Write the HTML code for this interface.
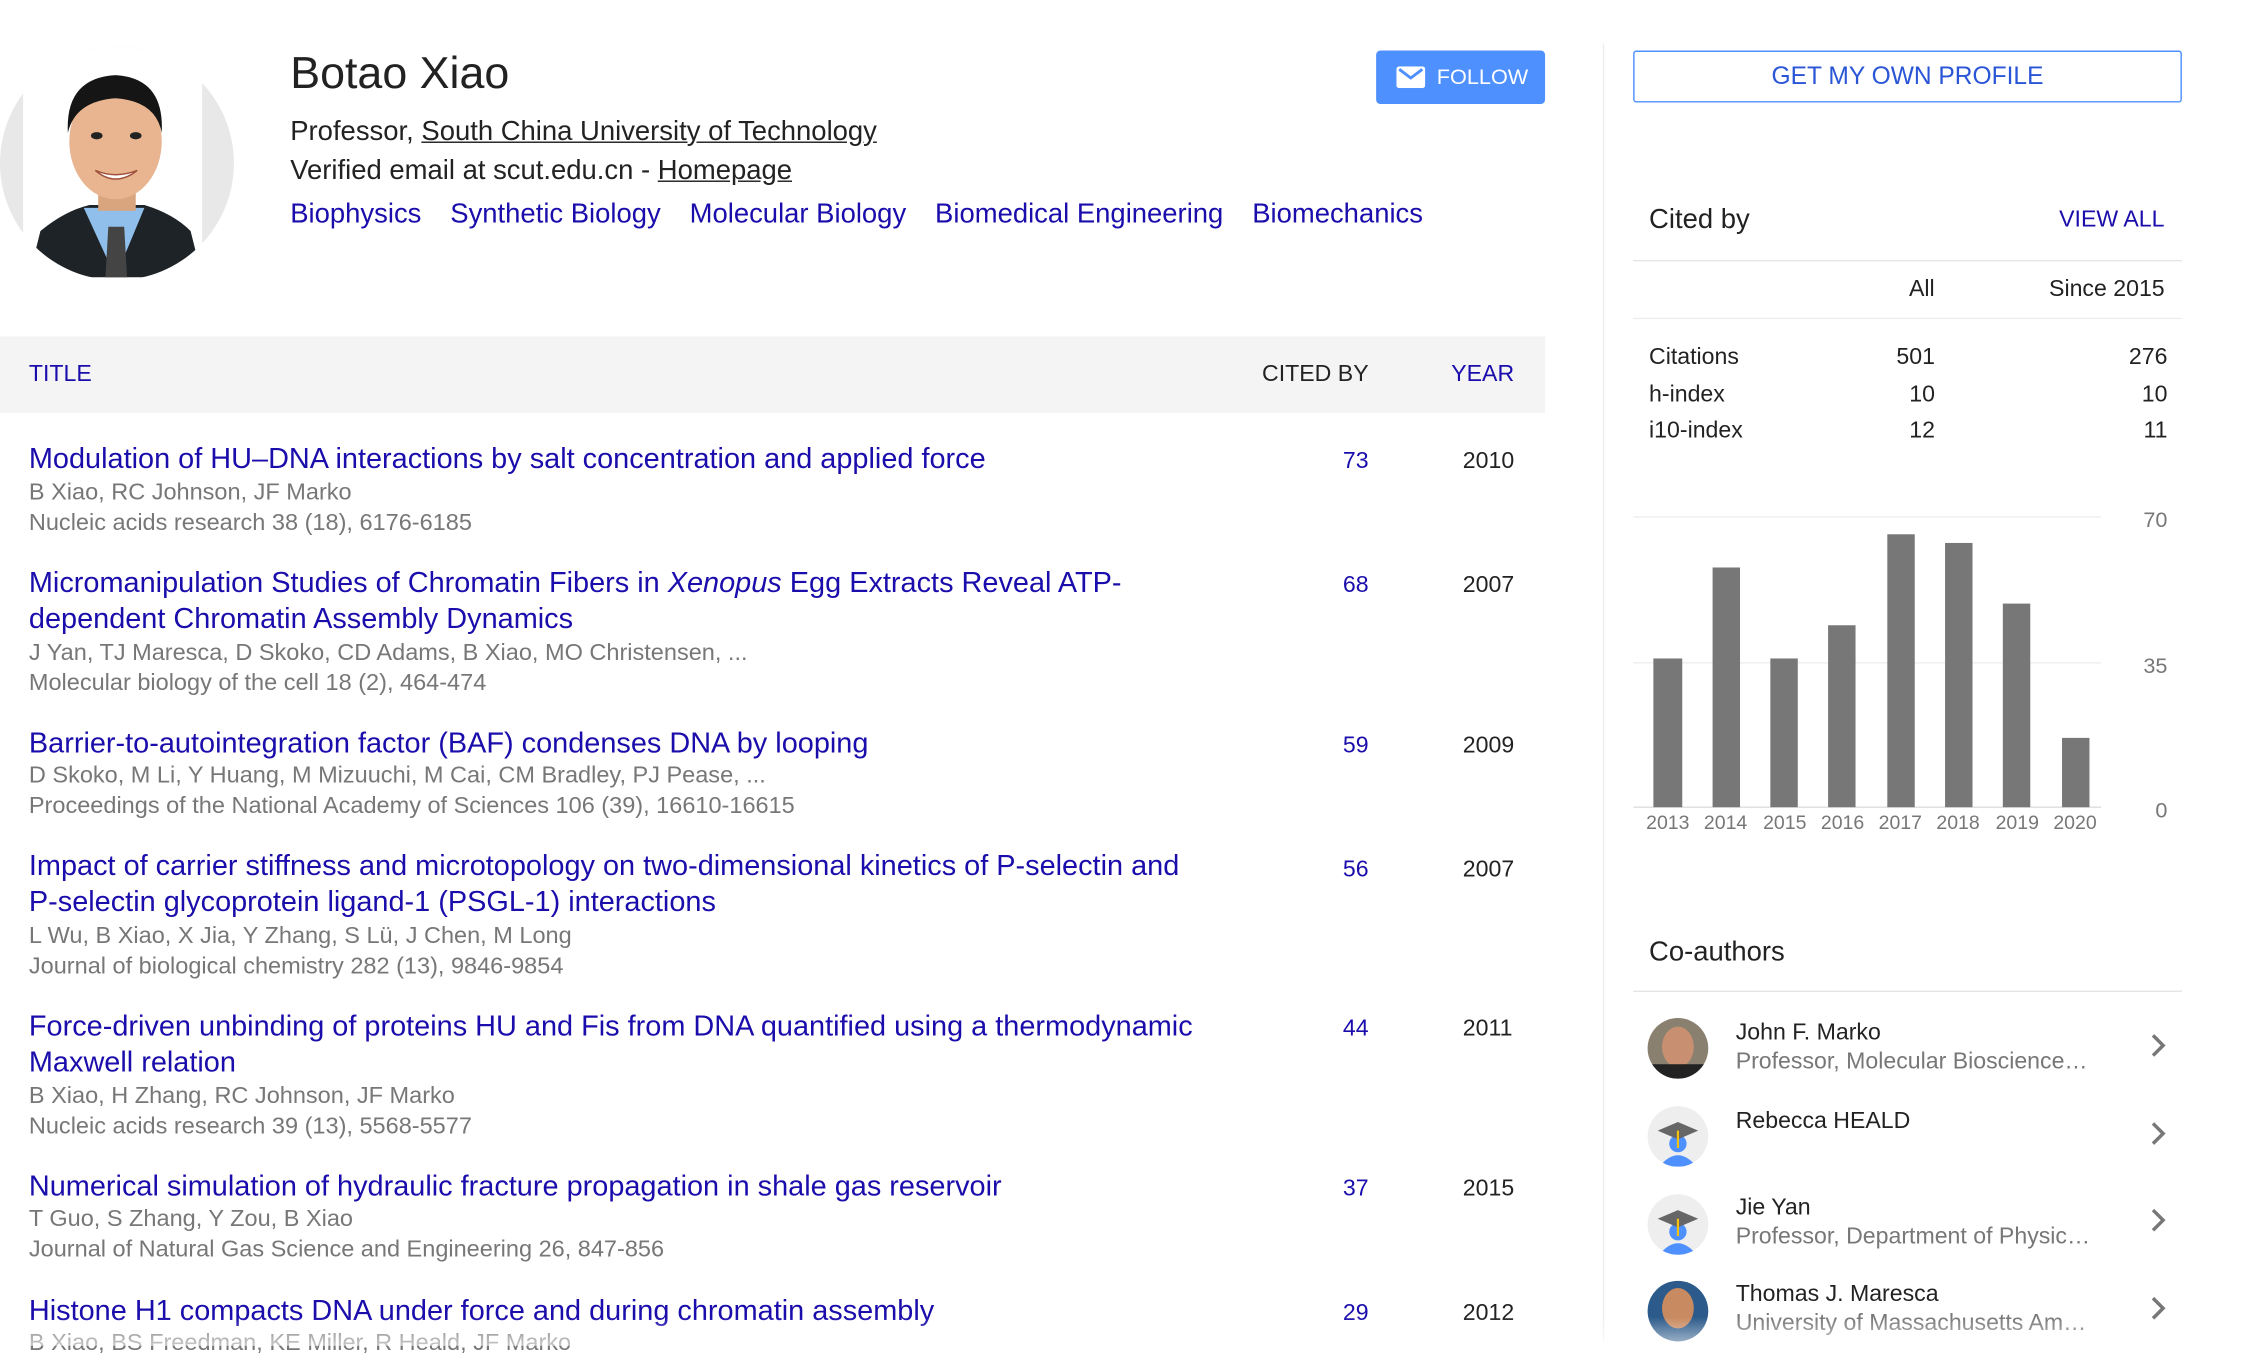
<!DOCTYPE html>
<html><head><meta charset="utf-8"><style>
html,body{margin:0;padding:0;background:#fff;width:2264px;height:1340px;overflow:hidden}
#w{position:absolute;left:0;top:0;width:1568px;height:928px;transform:scale(1.444,1.444);transform-origin:0 0;font-family:"Liberation Sans",Arial,sans-serif;color:#222}
.a{position:absolute;white-space:nowrap}
.b{color:#1a0dab}
.g{color:#777}
.t{font-size:20px;color:#1a0dab;line-height:25px}
.s{font-size:16.3px;color:#777;line-height:21px}
.n{font-size:16px;color:#1a0dab}
.y{font-size:16px;color:#222}
u{text-decoration:underline}
</style></head><body><div id="w">
<div class="a" style="left:0;top:32px;width:162px;height:162px;border-radius:50%;background:#e8e8e8;overflow:hidden">
<div style="position:absolute;left:16px;top:0;width:124px;height:162px;background:#fff"></div>
<svg style="position:absolute;left:0;top:0" width="162" height="162" viewBox="0 0 162 162">
<path d="M20 160 L28 128 Q45 114 62 110 L100 110 Q120 116 132 128 L140 160Z" fill="#1e2328"/>
<path d="M58 112 L80 160 L100 112 Z" fill="#8fbfea"/>
<path d="M75 125 L86 125 L88 160 L73 160Z" fill="#444"/>
<rect x="68" y="88" width="26" height="26" fill="#d9a57f"/>
<ellipse cx="80" cy="66" rx="32" ry="40" fill="#e8b590"/>
<path d="M47 60 Q45 22 80 20 Q114 22 112 60 Q108 38 80 36 Q52 38 47 60Z" fill="#151515"/>
<ellipse cx="67" cy="62" rx="4" ry="2.5" fill="#222"/><ellipse cx="94" cy="62" rx="4" ry="2.5" fill="#222"/>
<path d="M66 86 Q80 98 95 86 Q80 92 66 86Z" fill="#fff" stroke="#a0503a"/>
</svg></div>
<div class="a" style="left:201px;top:33px;font-size:31px;color:#222">Botao Xiao</div>
<div class="a" style="left:201px;top:81px;font-size:19px">Professor, <u>South China University of Technology</u></div>
<div class="a" style="left:201px;top:108px;font-size:19px">Verified email at scut.edu.cn - <u>Homepage</u></div>
<div class="a b" style="left:201px;top:138px;font-size:19px">Biophysics<span style="margin-left:20px">Synthetic Biology</span><span style="margin-left:20px">Molecular Biology</span><span style="margin-left:20px">Biomedical Engineering</span><span style="margin-left:20px">Biomechanics</span></div>
<div class="a" style="left:953px;top:35px;width:117px;height:37px;background:#4d90fe;border-radius:3px;color:#fff;font-size:15px">
<svg style="position:absolute;left:14px;top:11px" width="20" height="15" viewBox="0 0 20 15"><rect width="20" height="15" rx="2" fill="#fff"/><path d="M2 2 L10 8 L18 2" stroke="#4d90fe" stroke-width="2" fill="none"/></svg>
<span style="position:absolute;left:42px;top:10px">FOLLOW</span></div>
<div class="a" style="left:0;top:233px;width:1070px;height:53px;background:#f4f4f4"></div>
<div class="a b" style="left:20px;top:251px;font-size:16px">TITLE</div>
<div class="a" style="left:874px;top:251px;font-size:16px">CITED BY</div>
<div class="a b" style="left:1005px;top:251px;font-size:16px">YEAR</div>

<div class="a t" style="left:20px;top:306px">Modulation of HU–DNA interactions by salt concentration and applied force</div>
<div class="a s" style="left:20px;top:331px">B Xiao, RC Johnson, JF Marko<br>Nucleic acids research 38 (18), 6176-6185</div>
<div class="a n" style="left:930px;top:311px">73</div><div class="a y" style="left:1013px;top:311px">2010</div>

<div class="a t" style="left:20px;top:392px">Micromanipulation Studies of Chromatin Fibers in <i>Xenopus</i> Egg Extracts Reveal ATP-<br>dependent Chromatin Assembly Dynamics</div>
<div class="a s" style="left:20px;top:442px">J Yan, TJ Maresca, D Skoko, CD Adams, B Xiao, MO Christensen, ...<br>Molecular biology of the cell 18 (2), 464-474</div>
<div class="a n" style="left:930px;top:397px">68</div><div class="a y" style="left:1013px;top:397px">2007</div>

<div class="a t" style="left:20px;top:503px">Barrier-to-autointegration factor (BAF) condenses DNA by looping</div>
<div class="a s" style="left:20px;top:527px">D Skoko, M Li, Y Huang, M Mizuuchi, M Cai, CM Bradley, PJ Pease, ...<br>Proceedings of the National Academy of Sciences 106 (39), 16610-16615</div>
<div class="a n" style="left:930px;top:508px">59</div><div class="a y" style="left:1013px;top:508px">2009</div>

<div class="a t" style="left:20px;top:588px">Impact of carrier stiffness and microtopology on two-dimensional kinetics of P-selectin and<br>P-selectin glycoprotein ligand-1 (PSGL-1) interactions</div>
<div class="a s" style="left:20px;top:638px">L Wu, B Xiao, X Jia, Y Zhang, S Lü, J Chen, M Long<br>Journal of biological chemistry 282 (13), 9846-9854</div>
<div class="a n" style="left:930px;top:594px">56</div><div class="a y" style="left:1013px;top:594px">2007</div>

<div class="a t" style="left:20px;top:699px">Force-driven unbinding of proteins HU and Fis from DNA quantified using a thermodynamic<br>Maxwell relation</div>
<div class="a s" style="left:20px;top:749px">B Xiao, H Zhang, RC Johnson, JF Marko<br>Nucleic acids research 39 (13), 5568-5577</div>
<div class="a n" style="left:930px;top:704px">44</div><div class="a y" style="left:1013px;top:704px">2011</div>

<div class="a t" style="left:20px;top:810px">Numerical simulation of hydraulic fracture propagation in shale gas reservoir</div>
<div class="a s" style="left:20px;top:834px">T Guo, S Zhang, Y Zou, B Xiao<br>Journal of Natural Gas Science and Engineering 26, 847-856</div>
<div class="a n" style="left:930px;top:815px">37</div><div class="a y" style="left:1013px;top:815px">2015</div>

<div class="a t" style="left:20px;top:896px">Histone H1 compacts DNA under force and during chromatin assembly</div>
<div class="a s" style="left:20px;top:920px">B Xiao, BS Freedman, KE Miller, R Heald, JF Marko</div>
<div class="a n" style="left:930px;top:901px">29</div><div class="a y" style="left:1013px;top:901px">2012</div>

<div class="a" style="left:1110px;top:30px;width:1px;height:898px;background:#eee"></div>
<div class="a" style="left:1131px;top:35px;width:378px;height:34px;border:1px solid #4d90fe;border-radius:2px;font-size:17px;text-align:center;line-height:34px;color:#2a55d6">GET MY OWN PROFILE</div>
<div class="a" style="left:1142px;top:142px;font-size:19px">Cited by</div>
<div class="a b" style="left:1426px;top:144px;font-size:16px">VIEW ALL</div>
<div class="a" style="left:1131px;top:180px;width:380px;height:1px;background:#e5e5e5"></div>
<div class="a" style="left:1322px;top:192px;font-size:16px">All</div>
<div class="a" style="left:1419px;top:192px;font-size:16px">Since 2015</div>
<div class="a" style="left:1131px;top:220px;width:380px;height:1px;background:#eee"></div>
<div class="a" style="left:1142px;top:235px;font-size:16px;line-height:25.5px">Citations<br>h-index<br>i10-index</div>
<div class="a" style="left:1300px;top:235px;width:40px;text-align:right;font-size:16px;line-height:25.5px">501<br>10<br>12</div>
<div class="a" style="left:1460px;top:235px;width:41px;text-align:right;font-size:16px;line-height:25.5px">276<br>10<br>11</div>
<svg class="a" style="left:1131px;top:340px" width="380" height="250" viewBox="1131 340 380 250">
<line x1="1131" y1="358" x2="1455" y2="358" stroke="#eee"/>
<line x1="1131" y1="459" x2="1455" y2="459" stroke="#eee"/>
<line x1="1131" y1="559" x2="1455" y2="559" stroke="#ddd"/>
<g fill="#777">
<rect x="1145" y="456" width="20" height="103"/><rect x="1186" y="393" width="19" height="166"/>
<rect x="1226" y="456" width="19" height="103"/><rect x="1266" y="433" width="19" height="126"/>
<rect x="1307" y="370" width="19" height="189"/><rect x="1347" y="376" width="19" height="183"/>
<rect x="1387" y="418" width="19" height="141"/><rect x="1428" y="511" width="19" height="48"/>
</g>
<g font-family="Liberation Sans,sans-serif" font-size="13.5" fill="#777" text-anchor="middle">
<text x="1155" y="574">2013</text><text x="1195" y="574">2014</text><text x="1236" y="574">2015</text><text x="1276" y="574">2016</text>
<text x="1316" y="574">2017</text><text x="1356" y="574">2018</text><text x="1397" y="574">2019</text><text x="1437" y="574">2020</text>
</g>
<g font-family="Liberation Sans,sans-serif" font-size="15" fill="#777" text-anchor="end">
<text x="1501" y="365">70</text><text x="1501" y="466">35</text><text x="1501" y="566">0</text>
</g></svg>
<div class="a" style="left:1142px;top:649px;font-size:19px">Co-authors</div>
<div class="a" style="left:1131px;top:686px;width:380px;height:1px;background:#e5e5e5"></div>
<div class="a" style="left:1141px;top:705px;width:42px;height:42px;border-radius:50%;background:#8a8070;overflow:hidden"><div style="position:absolute;left:10px;top:6px;width:22px;height:28px;border-radius:50%;background:#c89070"></div><div style="position:absolute;left:0;top:32px;width:42px;height:14px;background:#222"></div></div>
<div class="a" style="left:1202px;top:707px;font-size:16px">John F. Marko</div>
<div class="a g" style="left:1202px;top:727px;font-size:16px">Professor, Molecular Bioscience…</div>
<div class="a" style="left:1141px;top:766px;width:42px;height:42px;border-radius:50%;background:#eee;overflow:hidden"><svg width="42" height="42"><circle cx="21" cy="26" r="6" fill="#4d90fe"/><path d="M8 42 Q21 26 34 42Z" fill="#4d90fe"/><path d="M7 17 L21 11 L35 17 L21 23Z" fill="#666"/><line x1="21" y1="17" x2="21" y2="29" stroke="#f4c20d" stroke-width="1.5"/></svg></div>
<div class="a" style="left:1202px;top:768px;font-size:16px">Rebecca HEALD</div>
<div class="a" style="left:1141px;top:827px;width:42px;height:42px;border-radius:50%;background:#eee;overflow:hidden"><svg width="42" height="42"><circle cx="21" cy="26" r="6" fill="#4d90fe"/><path d="M8 42 Q21 26 34 42Z" fill="#4d90fe"/><path d="M7 17 L21 11 L35 17 L21 23Z" fill="#666"/><line x1="21" y1="17" x2="21" y2="29" stroke="#f4c20d" stroke-width="1.5"/></svg></div>
<div class="a" style="left:1202px;top:828px;font-size:16px">Jie Yan</div>
<div class="a g" style="left:1202px;top:848px;font-size:16px">Professor, Department of Physic…</div>
<div class="a" style="left:1141px;top:887px;width:42px;height:42px;border-radius:50%;background:#2c5a8a;overflow:hidden"><div style="position:absolute;left:10px;top:5px;width:22px;height:28px;border-radius:50%;background:#c88a60"></div></div>
<div class="a" style="left:1202px;top:888px;font-size:16px">Thomas J. Maresca</div>
<div class="a g" style="left:1202px;top:908px;font-size:16px">University of Massachusetts Am…</div>
<svg class="a" style="left:1488px;top:714px" width="14" height="210" viewBox="0 0 14 210" fill="none" stroke="#777" stroke-width="2.4"><path d="M3 3 L10 10 L3 17"/><path d="M3 64 L10 71 L3 78"/><path d="M3 124 L10 131 L3 138"/><path d="M3 185 L10 192 L3 199"/></svg>
<div class="a" style="left:0;top:912px;width:1568px;height:20px;background:linear-gradient(rgba(255,255,255,0),rgba(255,255,255,.6))"></div>
</div></body></html>
